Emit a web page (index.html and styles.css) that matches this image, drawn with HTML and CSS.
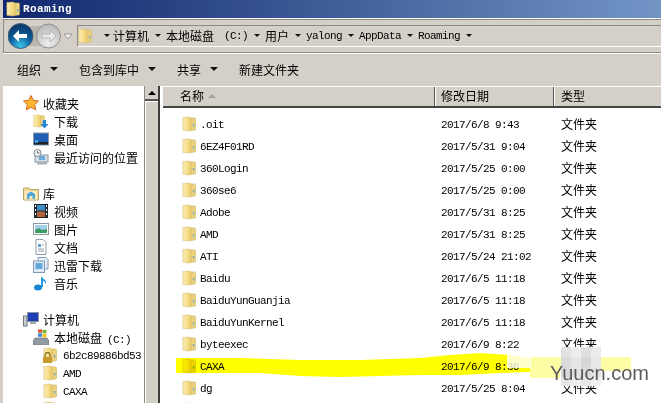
FILE: index.html
```html
<!DOCTYPE html>
<html lang="zh">
<head>
<meta charset="utf-8">
<title>Roaming</title>
<link rel="stylesheet" href="styles.css">
</head>
<body>
<svg class="defs" width="0" height="0">
  <defs>
    <linearGradient id="fg" x1="0" y1="0" x2="1" y2="0"><stop offset="0" stop-color="#fbeeb4"/><stop offset=".6" stop-color="#f6dc86"/><stop offset="1" stop-color="#e9c766"/></linearGradient>
    <symbol id="folder" viewBox="0 0 16 18">
      <path d="M9 2h5.500l1 1v12l-1 1H9z" fill="#ecd27c" stroke="#c9ad62" stroke-width=".6"/>
      <path d="M1 1.500 8 1l2.500 1.500v14L8 17l-7-.8z" fill="url(#fg)" stroke="#d4b970" stroke-width=".6"/>
      <path d="M12.500 9h1.500v3h-1.500z" fill="#6da6c9"/>
    </symbol>
  </defs>
</svg>
<div class="window">
  <div class="titlebar">
    <svg class="ticon"><use href="#folder"/></svg>
    <span class="ttext">Roaming</span>
  </div>
  <div class="navbar">
    <svg class="navbtns" width="69" height="28" viewBox="0 0 69 28">
      <defs>
        <radialGradient id="bk" cx=".5" cy=".9" r=".8"><stop offset="0" stop-color="#3cc6f0"/><stop offset=".55" stop-color="#0d5f9c"/><stop offset="1" stop-color="#0a3b6d"/></radialGradient>
        <radialGradient id="fw" cx=".5" cy=".8" r=".8"><stop offset="0" stop-color="#eeeeee"/><stop offset="1" stop-color="#b7b7b7"/></radialGradient>
      </defs>
      <rect x="12" y="4" width="30" height="20" fill="#b9b6ae"/>
      <circle cx="12.500" cy="14" r="12.500" fill="url(#bk)" stroke="#49627a"/>
      <path d="M5 14l6-6v4h8v4h-8v4z" fill="#fff"/>
      <circle cx="40.500" cy="14" r="12" fill="url(#fw)" stroke="#8f8f8f"/>
      <path d="M48 14l-6-6v4h-8v4h8v4z" fill="#e9e9e9" stroke="#a4a4a4" stroke-width=".7"/>
      <path d="M56 12h8l-4 5z" fill="#f2f2f2" stroke="#8c8c8c" stroke-width=".8"/>
    </svg>
    <div class="address">
      <svg class="aicon"><use href="#folder"/></svg>
      <span class="crumb first"><i class="caret"></i>计算机</span>
      <span class="crumb"><i class="caret"></i>本地磁盘<span class="lat drv">(C:)</span></span>
      <span class="crumb"><i class="caret"></i>用户</span>
      <span class="crumb"><i class="caret"></i><span class="lat">yalong</span></span>
      <span class="crumb"><i class="caret"></i><span class="lat">AppData</span></span>
      <span class="crumb"><i class="caret"></i><span class="lat">Roaming</span></span>
      <i class="caret"></i>
    </div>
  </div>
  <div class="toolbar">
    <span class="tool wide">组织<i class="caret"></i></span>
    <span class="tool wide">包含到库中<i class="caret"></i></span>
    <span class="tool wide">共享<i class="caret"></i></span>
    <span class="tool">新建文件夹</span>
  </div>
  <div class="main">
    <div class="side">
      <div class="tree">
        <div class="node top"><svg class="ic" viewBox="0 0 16 16"><path d="M8 .5l2.300 4.800 5.200.7-3.800 3.600 1 5.200L8 12.300l-4.700 2.500 1-5.200L.5 6l5.200-.7z" fill="#f9b62f" stroke="#d2691e"/></svg><span>收藏夹</span></div>
        <div class="node sub"><svg class="ic" viewBox="0 0 16 16"><use href="#folder" width="12" height="16"/><path d="M10 7h3v4h2.500l-4 4.500-4-4.500H10z" fill="#2a86d6"/></svg><span>下载</span></div>
        <div class="node sub"><svg class="ic" viewBox="0 0 16 16"><rect x=".5" y="2" width="15" height="12" fill="#1f5fb4" stroke="#8a97a8"/><rect x="1" y="11" width="14" height="2.500" fill="#222"/><rect x="2" y="9" width="3" height="3" fill="#3aa0e0"/></svg><span>桌面</span></div>
        <div class="node sub"><svg class="ic" viewBox="0 0 16 16"><rect x="2" y="6" width="13" height="7" fill="#d6dde4" stroke="#8f9aa5"/><rect x="6" y="7" width="6" height="4" fill="#6fa9d8"/><rect x="4" y="13" width="10" height="2.500" fill="#a9b1b8"/><circle cx="4.500" cy="4" r="3.500" fill="#f2f4f6" stroke="#7b8794"/><path d="M4.500 2v2h2" fill="none" stroke="#333" stroke-width=".7"/></svg><span>最近访问的位置</span></div>
        <div class="node top gap"><svg class="ic" viewBox="0 0 16 16"><path d="M.5 3h6l1 1.500h8V15H.5z" fill="#f0d88f" stroke="#b9a468"/><path d="M1.500 6h13v8.500h-13z" fill="#fbeab8"/><path d="M4 9l4-2.500L12 9v5H9.500v-3h-3v3H4z" fill="#4ea5d8"/></svg><span>库</span></div>
        <div class="node sub"><svg class="ic" viewBox="0 0 16 16"><rect x="1" y="1" width="14" height="14" fill="#1c2a30"/><rect x="4" y="2" width="8" height="5.500" fill="#3f8fc4"/><rect x="4" y="8.500" width="8" height="5.500" fill="#b3643c"/><path d="M2 2h1v2H2zM2 6h1v2H2zM2 10h1v2H2zM13 2h1v2h-1zM13 6h1v2h-1zM13 10h1v2h-1z" fill="#fff"/></svg><span>视频</span></div>
        <div class="node sub"><svg class="ic" viewBox="0 0 16 16"><rect x=".5" y="2.500" width="15" height="11" fill="#fff" stroke="#8e979f"/><rect x="2" y="4" width="12" height="8" fill="#9fd0ea"/><path d="M2 9l4-2 3 2 5-1v4H2z" fill="#3e9a63"/></svg><span>图片</span></div>
        <div class="node sub"><svg class="ic" viewBox="0 0 16 16"><path d="M3 .5h7l3 3v12H3z" fill="#fff" stroke="#8e9cab"/><path d="M5 5h3v3H5z" fill="#5da2d8"/><path d="M5 10h6M5 12h6M9 6h2" stroke="#8e9cab"/></svg><span>文档</span></div>
        <div class="node sub"><svg class="ic" viewBox="0 0 16 16"><path d="M5 .5h8l2 2V12H5z" fill="#e8eef5" stroke="#7e9ab8"/><rect x=".5" y="4" width="11" height="11.500" fill="#dfeaf5" stroke="#7e9ab8"/><rect x="2.500" y="6" width="7" height="6" fill="#5fa8de"/></svg><span>迅雷下载</span></div>
        <div class="node sub"><svg class="ic" viewBox="0 0 16 16"><ellipse cx="5" cy="12.500" rx="4" ry="3" fill="#1b86d0"/><path d="M8 12V1c1 3 6 3 5 8-1-2-2-3-3-3v6z" fill="#2b9ae0"/></svg><span>音乐</span></div>
        <div class="node top gap"><svg class="ic" viewBox="0 0 16 16"><rect x="4.500" y="1.500" width="11" height="9" fill="#1d3fb5" stroke="#8a94a0"/><rect x="7" y="11" width="6" height="2" fill="#a3abb3"/><rect x=".5" y="5" width="3.500" height="10" fill="#c9ced3" stroke="#6c7680"/></svg><span>计算机</span></div>
        <div class="node sub"><svg class="ic" viewBox="0 0 16 16"><path d="M2 9h12l2 3v3.500H0V12z" fill="#8f9aa3" stroke="#5d6a74" stroke-width=".6"/><path d="M5 .5l4-.3v3.500H5z" fill="#e25a33"/><path d="M9.500 1l4-.2v3.500h-4z" fill="#70b63d"/><path d="M5 4.300h4v3.500H5z" fill="#3c8fd8"/><path d="M9.500 4.800h4v3.500h-4z" fill="#f5c518"/></svg><span>本地磁盘<span class="lat drv">(C:)</span></span></div>
        <div class="node leaf"><svg class="fi"><use href="#folder"/></svg><svg class="lock" viewBox="0 0 9 11"><path d="M2 5V3a2.500 2.500 0 0 1 5 0v2" fill="none" stroke="#8a6a20" stroke-width="1.300"/><rect y="5" width="9" height="6" fill="#c69a2b"/></svg><span class="lat">6b2c89886bd53</span></div>
        <div class="node leaf"><svg class="fi"><use href="#folder"/></svg><span class="lat">AMD</span></div>
        <div class="node leaf"><svg class="fi"><use href="#folder"/></svg><span class="lat">CAXA</span></div>
        <div class="node leaf"><svg class="fi"><use href="#folder"/></svg></div>
      </div>
      <div class="scroll">
        <div class="sbtn"><i class="uptri"></i></div>
        <div class="sthumb"></div>
      </div>
    </div>
    <div class="pane">
      <div class="head">
        <div class="hc c1">名称<i class="sort"></i></div>
        <div class="hc c2">修改日期</div>
        <div class="hc c3">类型</div>
      </div>
      <div class="rows">
        <div class="row"><div class="c1 nm"><svg class="fi"><use href="#folder"/></svg><span class="lat">.oit</span></div><div class="c2"><span class="lat">2017/6/8 9:43</span></div><div class="c3">文件夹</div></div>
        <div class="row"><div class="c1 nm"><svg class="fi"><use href="#folder"/></svg><span class="lat">6EZ4F01RD</span></div><div class="c2"><span class="lat">2017/5/31 9:04</span></div><div class="c3">文件夹</div></div>
        <div class="row"><div class="c1 nm"><svg class="fi"><use href="#folder"/></svg><span class="lat">360Login</span></div><div class="c2"><span class="lat">2017/5/25 0:00</span></div><div class="c3">文件夹</div></div>
        <div class="row"><div class="c1 nm"><svg class="fi"><use href="#folder"/></svg><span class="lat">360se6</span></div><div class="c2"><span class="lat">2017/5/25 0:00</span></div><div class="c3">文件夹</div></div>
        <div class="row"><div class="c1 nm"><svg class="fi"><use href="#folder"/></svg><span class="lat">Adobe</span></div><div class="c2"><span class="lat">2017/5/31 8:25</span></div><div class="c3">文件夹</div></div>
        <div class="row"><div class="c1 nm"><svg class="fi"><use href="#folder"/></svg><span class="lat">AMD</span></div><div class="c2"><span class="lat">2017/5/31 8:25</span></div><div class="c3">文件夹</div></div>
        <div class="row"><div class="c1 nm"><svg class="fi"><use href="#folder"/></svg><span class="lat">ATI</span></div><div class="c2"><span class="lat">2017/5/24 21:02</span></div><div class="c3">文件夹</div></div>
        <div class="row"><div class="c1 nm"><svg class="fi"><use href="#folder"/></svg><span class="lat">Baidu</span></div><div class="c2"><span class="lat">2017/6/5 11:18</span></div><div class="c3">文件夹</div></div>
        <div class="row"><div class="c1 nm"><svg class="fi"><use href="#folder"/></svg><span class="lat">BaiduYunGuanjia</span></div><div class="c2"><span class="lat">2017/6/5 11:18</span></div><div class="c3">文件夹</div></div>
        <div class="row"><div class="c1 nm"><svg class="fi"><use href="#folder"/></svg><span class="lat">BaiduYunKernel</span></div><div class="c2"><span class="lat">2017/6/5 11:18</span></div><div class="c3">文件夹</div></div>
        <div class="row"><div class="c1 nm"><svg class="fi"><use href="#folder"/></svg><span class="lat">byteexec</span></div><div class="c2"><span class="lat">2017/6/9 8:22</span></div><div class="c3">文件夹</div></div>
        <div class="row"><div class="c1 nm"><svg class="fi"><use href="#folder"/></svg><span class="lat">CAXA</span></div><div class="c2"><span class="lat">2017/6/9 8:36</span></div></div>
        <div class="row"><div class="c1 nm"><svg class="fi"><use href="#folder"/></svg><span class="lat">dg</span></div><div class="c2"><span class="lat">2017/5/25 8:04</span></div><div class="c3">文件夹</div></div>
        <div class="row"><div class="c1 nm"><svg class="fi"><use href="#folder"/></svg></div></div>
      </div>
    </div>
  </div>
</div>
<svg class="marker" width="661" height="403" viewBox="0 0 661 403">
  <path d="M176 358 240 358 300 360 360 360 420 358 450 355 480 353 510 355 530 358V372L500 373 460 375 420 375 380 376 340 377 300 376 260 373 176 373z" fill="#ffff00"/>
  <path d="M530 357H631V371H560V378H530z" fill="#fdfda6"/>
</svg>
<svg class="cover" width="661" height="403" viewBox="0 0 661 403">
  <rect x="507" y="352" width="24" height="16" fill="#ffffff" fill-opacity=".8"/>
  <rect x="561" y="347" width="10" height="10" fill="#e2e2e2"/>
  <rect x="571" y="347" width="10" height="10" fill="#ededed"/>
  <rect x="581" y="347" width="10" height="10" fill="#e0e0e0"/>
  <rect x="591" y="347" width="10" height="10" fill="#eaeaea"/>
  <rect x="561" y="357" width="10" height="10" fill="#dadada"/>
  <rect x="571" y="357" width="10" height="10" fill="#e6e6e6"/>
  <rect x="581" y="357" width="10" height="10" fill="#d6d6d6"/>
  <rect x="591" y="357" width="10" height="10" fill="#e8e8e8"/>
  <rect x="561" y="367" width="10" height="10" fill="#d8d8d8"/>
  <rect x="571" y="367" width="10" height="10" fill="#e2e2e2"/>
  <rect x="581" y="367" width="10" height="10" fill="#dcdcdc"/>
  <rect x="591" y="367" width="10" height="10" fill="#e4e4e4"/>
  <rect x="561" y="377" width="10" height="9" fill="#e6e6e6"/>
  <rect x="571" y="377" width="10" height="9" fill="#eeeeee"/>
  <rect x="581" y="377" width="10" height="9" fill="#e8e8e8"/>
  <rect x="591" y="377" width="10" height="9" fill="#f0f0f0"/>
</svg>
<span class="wm">Yuucn.com</span>
</body>
</html>
```

FILE: styles.css
```css
* { box-sizing: border-box; }
html, body { margin: 0; padding: 0; }
body {
  width: 661px;
  height: 403px;
  overflow: hidden;
  position: relative;
  background: #d4d0c8;
  font-family: "Noto Sans CJK SC", sans-serif;
  font-size: 12px;
  color: #000;
}
.defs { position: absolute; }
.window { display: flex; flex-direction: column; height: 403px; padding-left: 3px; }
.titlebar {
  height: 18px;
  flex: none;
  display: flex;
  align-items: center;
  gap: 3px;
  padding-left: 3px;
  background: linear-gradient(90deg, #10276f 0%, #3f5e97 50%, #7295c6 100%);
}
.ticon { width: 14px; height: 16px; }
.ttext {
  font-family: "Liberation Mono", monospace;
  font-size: 11px;
  font-weight: bold;
  color: #fff;
  letter-spacing: .4px;
}
.navbar {
  height: 36px;
  flex: none;
  display: flex;
  align-items: center;
  border-top: 1px solid #fff;
  border-bottom: 1px solid #fff;
  box-shadow: inset 0 1px 0 #8c8a85, inset 0 -1px 0 #8c8a85, inset 1px 0 0 #8c8a85;
  padding-left: 5px;
}
.navbtns { flex: none; }
.address {
  flex: 1;
  height: 22px;
  display: flex;
  align-items: center;
  border-top: 1px solid #8c8a85;
  border-bottom: 1px solid #fff;
  border-left: 1px solid #8c8a85;
  padding-bottom: 2px;
  gap: 6px;
  white-space: nowrap;
}
.aicon { width: 14px; height: 18px; flex: none; margin-top: 2px; margin-right: 6px; }
.crumb { display: inline-flex; align-items: center; gap: 5px; }
.first { gap: 3px; }
.caret {
  display: inline-block;
  flex: none;
  width: 0;
  height: 0;
  border-left: 3px solid transparent;
  border-right: 3px solid transparent;
  border-top: 3px solid #111;
}
.lat {
  display: inline-block;
  font-family: "Liberation Mono", monospace;
  font-size: 11px;
  letter-spacing: -.6px;
  padding-top: 1px;
}
.drv { margin-left: 5px; }
.toolbar {
  height: 32px;
  flex: none;
  display: flex;
  align-items: center;
  padding: 0 0 2px 14px;
  gap: 21px;
}
.tool { display: inline-flex; align-items: center; gap: 9px; }
.tool .caret { border-left-width: 4px; border-right-width: 4px; border-top-width: 4px; }
.main { flex: 1; min-height: 0; display: flex; }
.side { width: 157px; flex: none; display: flex; border-right: 2px solid #3e3e3e; }
.tree { width: 141px; flex: none; background: #fff; padding-top: 8px; overflow: hidden; }
.node { height: 18px; display: flex; align-items: center; white-space: nowrap; }
.top { padding-left: 20px; gap: 4px; }
.gap { margin-top: 18px; }
.sub { padding-left: 30px; gap: 5px; }
.leaf { padding-left: 40px; gap: 6px; position: relative; }
.ic { width: 16px; height: 16px; flex: none; }
.fi { width: 14px; height: 16px; flex: none; }
.lock { position: absolute; left: 40px; top: 6px; width: 9px; height: 11px; }
.scroll { width: 14px; flex: none; border-left: 1px solid #8c8a85; }
.sbtn { height: 15px; display: flex; align-items: center; justify-content: center; border-bottom: 2px solid #555; }
.uptri { width: 0; height: 0; border-left: 4px solid transparent; border-right: 4px solid transparent; border-bottom: 4px solid #000; }
.sthumb { height: 100%; border-top: 1px solid #fff; border-left: 1px solid #fff; }
.pane { flex: 1; min-width: 0; background: #fff; display: flex; flex-direction: column; }
.head { height: 22px; flex: none; display: flex; margin-left: 3px; border-top: 1px solid #fff; border-bottom: 2px solid #444; background: #d4d0c8; }
.hc { display: flex; align-items: center; padding-bottom: 2px; border-right: 1px solid #fff; box-shadow: inset -1px 0 0 #555; }
.hc:last-child { border-right: 0; box-shadow: none; }
.c1 { width: 273px; flex: none; padding-left: 17px; }
.c2 { width: 119px; flex: none; padding-left: 5px; }
.c3 { flex: 1; padding-left: 6px; }
.head .c1 { gap: 4px; }
.sort { width: 0; height: 0; border-left: 4px solid transparent; border-right: 4px solid transparent; border-bottom: 4px solid #a5a39d; }
.rows { margin-left: 3px; padding-top: 5px; }
.row { height: 22px; display: flex; align-items: center; flex: none; white-space: nowrap; }
.row .c2 { display: flex; align-items: center; }
.row .c3 { padding-bottom: 2px; }
.nm { display: flex; align-items: center; gap: 4px; padding-left: 19px; }
.marker { position: absolute; left: 0; top: 0; pointer-events: none; mix-blend-mode: multiply; }
.cover { position: absolute; left: 0; top: 0; pointer-events: none; }
.wm {
  position: absolute;
  left: 550px;
  top: 364px;
  font-family: "Liberation Sans", sans-serif;
  font-size: 20px;
  color: #5b5b5b;
  line-height: 18px;
}
```
